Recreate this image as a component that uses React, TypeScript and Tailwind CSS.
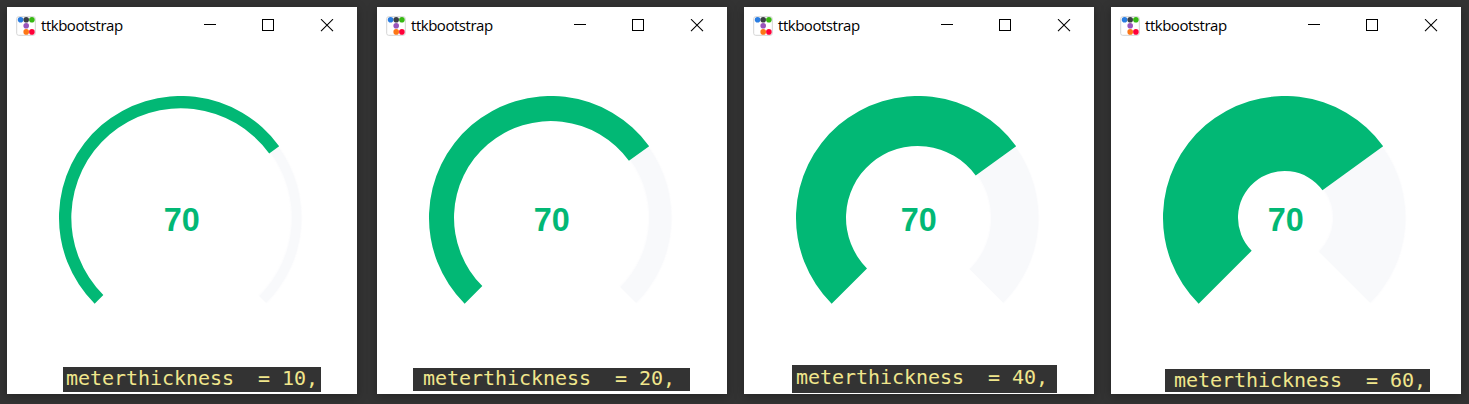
type MeterWindow = {
  thickness: number;
  ring: number;
  offset: string;
  label: string;
};

const windows: MeterWindow[] = [
  { thickness: 10, ring: 12.3, offset: "", label: "ml-[56px] mt-[49px] h-[25px] w-[258px] pl-[3px] leading-[22px]" },
  { thickness: 20, ring: 25, offset: "ml-[20px]", label: "ml-[36px] mt-[50px] h-[23px] w-[277px] pl-[10px] leading-[20px]" },
  { thickness: 40, ring: 50, offset: "ml-[17px]", label: "ml-[48px] mt-[47px] h-[28px] w-[265px] pl-[4px] leading-[24px]" },
  { thickness: 60, ring: 75, offset: "ml-[17px]", label: "ml-[54px] mt-[51px] h-[23px] w-[265px] pl-[9px] leading-[22px]" },
];

const CX = 173.7;
const CY = 121.7;
const R = 121.7;

function sector(from: number, to: number, outer: number, inner: number, cx = CX) {
  const point = (deg: number, r: number) => {
    const a = (deg * Math.PI) / 180;
    return `${(cx + r * Math.cos(a)).toFixed(2)} ${(CY + r * Math.sin(a)).toFixed(2)}`;
  };
  const large = to - from > 180 ? 1 : 0;
  return `M${point(from, outer)}A${outer} ${outer} 0 ${large} 1 ${point(to, outer)}L${point(to, inner)}A${inner} ${inner} 0 ${large} 0 ${point(from, inner)}Z`;
}

function AppIcon() {
  return (
    <svg width="20" height="20" viewBox="0 0 20 20" className="shrink-0">
      <rect x="0.7" y="0.7" width="18.6" height="18.6" rx="2" fill="#fff" stroke="#d4d4d4" />
      <circle cx="4.6" cy="3.8" r="2.8" fill="#2a7de1" />
      <circle cx="10.2" cy="3.8" r="2.8" fill="#3b3f44" />
      <circle cx="15.9" cy="3.8" r="2.8" fill="#37b812" />
      <circle cx="10.2" cy="9.8" r="2.8" fill="#9954bb" />
      <circle cx="10.2" cy="15.9" r="2.8" fill="#fd7616" />
      <circle cx="15.9" cy="15.9" r="2.8" fill="#ff0039" />
    </svg>
  );
}

function TitleBar() {
  return (
    <div className="flex h-[37px] items-center pl-[9px] pr-[23px]">
      <AppIcon />
      <span className="mb-[2px] ml-[5px] font-['Open_Sans',sans-serif] text-[15px] leading-[20px] tracking-[-0.47px] text-black">ttkbootstrap</span>
      <svg width="130" height="13" viewBox="0 0 130 13" className="ml-auto" fill="none" stroke="#000" shapeRendering="crispEdges">
        <path d="M0 5.5h12" />
        <rect x="58.5" y="0.5" width="11" height="11" />
        <path d="M117 0.2l12 12M129 0.2l-12 12" shapeRendering="auto" strokeWidth="1.1" />
      </svg>
    </div>
  );
}

function Meter({ ring }: { ring: number }) {
  return (
    <svg width="350" height="222" viewBox="0 0 350 222" className="mt-[52px] block">
      <path d={sector(324, 405, R, R - ring + 0.5)} fill="#fdfdfe" />
      <path d={sector(324, 405, R - 1.3, R - ring + 1.3, CX + 0.4)} fill="#f8f9fb" />
      <path d={sector(135, 324, R, R - ring)} fill="#02b875" />
      <text x="156.7" y="135.3" textLength="36" lengthAdjust="spacingAndGlyphs" fill="#02b875" className="font-['Liberation_Sans',sans-serif] text-[34px] font-bold">
        70
      </text>
    </svg>
  );
}

export default function App() {
  return (
    <div className="flex h-[404px] w-[1469px] items-start overflow-hidden bg-[#333333] pl-[7px] pt-[7px]">
      {windows.map((w) => (
        <div key={w.thickness} className={`flow-root h-[387px] w-[350px] shrink-0 bg-white shadow-[0_2px_10px_rgba(0,0,0,0.3)] ${w.offset}`}>
          <TitleBar />
          <Meter ring={w.ring} />
          <div className={`whitespace-pre bg-[#333333] font-['DejaVu_Sans_Mono',monospace] text-[20px] tracking-[-0.04px] text-[#f0e68c] ${w.label}`}>
            {`meterthickness  = ${w.thickness},`}
          </div>
        </div>
      ))}
    </div>
  );
}
